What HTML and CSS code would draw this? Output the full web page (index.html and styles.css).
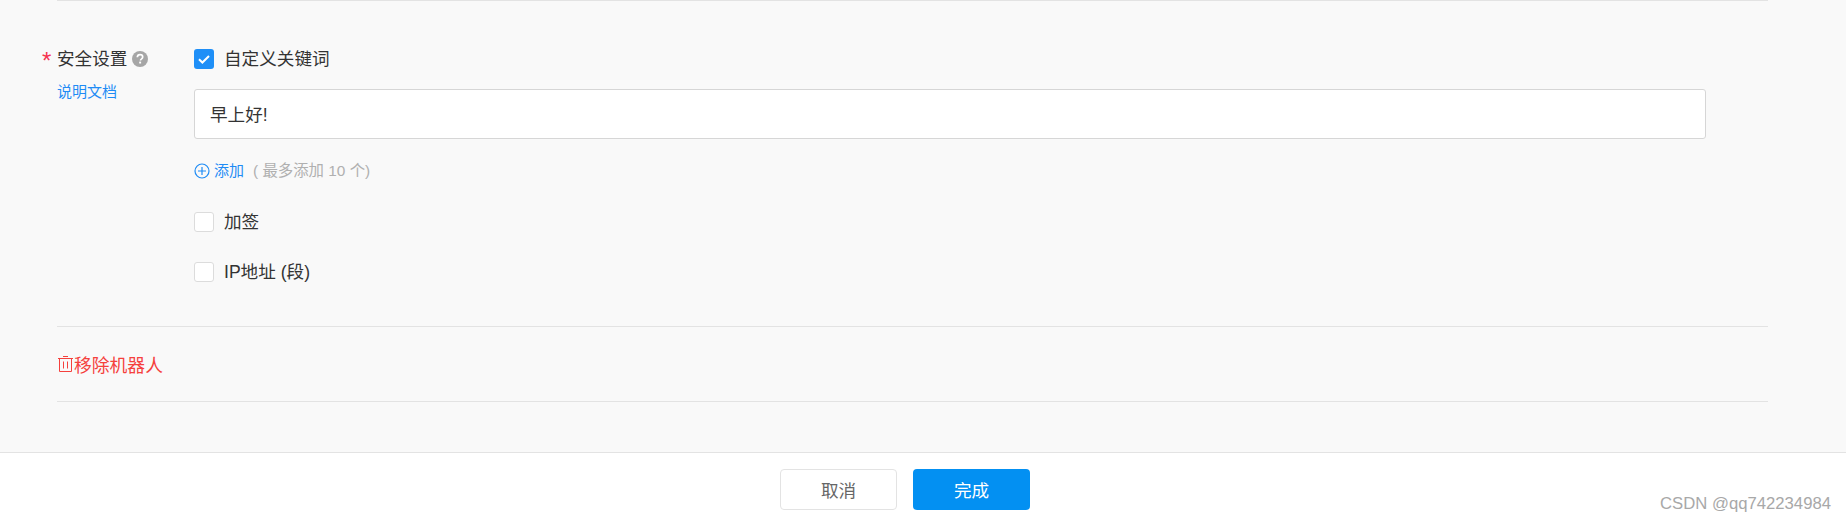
FILE: index.html
```html
<!DOCTYPE html>
<html lang="zh-CN">
<head>
    <meta charset="UTF-8">
    <title>机器人设置</title>
    <link rel="stylesheet" href="styles.css">
</head>
<body>

    <div class="main">
        <div class="security">
            <div class="side">
                <div class="side-title">
                    <span class="star">*</span>
                    <span class="lift">安全设置</span>
                    <svg class="help" width="16" height="16" viewBox="0 0 16 16">
                        <circle cx="8" cy="8" r="8" fill="#a6a6a6"/>
                        <path d="M5.3 6.2C5.4 4.6 6.5 3.6 8 3.6c1.6 0 2.700 1 2.700 2.300 0 1.100-.6 1.600-1.400 2.200-.6.4-.8.7-.8 1.500" fill="none" stroke="#fff" stroke-width="1.7"/>
                        <rect x="7.2" y="10.6" width="1.9" height="1.9" fill="#fff"/>
                    </svg>
                </div>
                <a class="doc-link">说明文档</a>
            </div>
            <div class="options">
                <label class="check-row">
                    <span class="box checked">
                        <svg width="20" height="20" viewBox="0 0 20 20"><path d="M5 10.2l3.400 3.300L15 7" fill="none" stroke="#fff" stroke-width="2"/></svg>
                    </span>
                    <span class="lift">自定义关键词</span>
                </label>
                <input class="keyword" type="text" value="早上好!">
                <div class="add-row">
                    <svg width="16" height="16" viewBox="0 0 16 16">
                        <circle cx="8" cy="8" r="7" fill="none" stroke="#1f8cf5" stroke-width="1.2"/>
                        <path d="M4 8h8M8 4v8" stroke="#1f8cf5" stroke-width="1.2"/>
                    </svg>
                    <a class="add-link lift">添加</a>
                    <span class="add-hint lift">( 最多添加 10 个)</span>
                </div>
                <label class="check-row sign-row"><span class="box"></span><span class="lift">加签</span></label>
                <label class="check-row ip-row"><span class="box"></span><span class="lift">IP地址 (段)</span></label>
            </div>
        </div>

        <div class="remove">
            <svg class="trash" width="15" height="17" viewBox="0 0 15 17">
                <path d="M0 2.500h15M1.500 2.500v13h12v-13M5.500 5.500v7M9.500 5.500v7M5 .5h5" fill="none" stroke="#f5413d" stroke-width="1"/>
            </svg>
            <span>移除机器人</span>
        </div>
    </div>

    <div class="footer">
        <button class="btn">取消</button>
        <button class="btn primary">完成</button>
        <span class="watermark">CSDN @qq742234984</span>
    </div>

</body>
</html>
```

FILE: styles.css
```css
/* page */
html, body { margin: 0; padding: 0; }
body { height: 522px; overflow: hidden; background: #f9f9f9; color: #333; font-family: "Liberation Sans", "Noto Sans CJK SC", sans-serif; font-size: 17.6px; display: flex; flex-direction: column; }

.main { flex: 1; padding: 0 78px 0 57px; }
.lift { margin-bottom: 4px; }

/* security block */
.security { display: flex; height: 327px; box-sizing: border-box; border-top: 1px solid #e3e3e3; border-bottom: 1px solid #e3e3e3; padding-top: 47px; }
.side { width: 137px; flex: none; }
.side-title { position: relative; display: flex; align-items: center; gap: 5px; height: 22px; color: #333; }
.star { position: absolute; left: -15px; top: 1px; color: #f5334f; font-size: 24px; line-height: 24px; }
.help { flex: none; }
.doc-link { display: block; margin-top: 12px; color: #1f8cf5; font-size: 15px; line-height: 20px; }

.options { width: 1512px; }
.check-row { display: flex; align-items: center; height: 22px; gap: 10px; }
.box { width: 20px; height: 20px; flex: none; box-sizing: border-box; border: 1px solid #dcdcdc; border-radius: 3px; background: #fff; }
.box.checked { border: none; background: #1f8ff7; }
.box svg { display: block; }

.keyword { display: block; box-sizing: border-box; width: 100%; height: 50px; margin-top: 19px; padding: 0 15px 2px; border: 1px solid #d6d6d6; border-radius: 3px; background: #fff; color: #333; font: inherit; outline: none; }

.add-row { display: flex; align-items: center; height: 22px; margin-top: 21px; font-size: 15px; }
.add-link { margin-left: 4px; color: #1f8cf5; }
.add-hint { margin-left: 9px; color: #b0b0b0; font-size: 15.4px; }

.sign-row { margin-top: 29px; }
.ip-row { margin-top: 28px; }

/* remove */
.remove { display: flex; align-items: center; gap: 1px; height: 75px; box-sizing: border-box; border-bottom: 1px solid #e3e3e3; color: #f5413d; font-size: 17.8px; }
.trash { margin-left: 1px; }

/* footer */
.footer { position: relative; display: flex; justify-content: center; gap: 16px; height: 70px; box-sizing: border-box; padding: 16px 36px 12px 0; border-top: 1px solid #e3e3e3; background: #fff; }
.btn { width: 117px; height: 41px; border: 1px solid #e3e3e3; border-radius: 4px; background: #fff; color: #666; font: inherit; cursor: pointer; }
.btn.primary { border: none; background: #0390f2; color: #fff; }
.watermark { position: absolute; right: 15px; top: 41px; color: #a8a8a8; font-size: 16.7px; line-height: 20px; }
```
